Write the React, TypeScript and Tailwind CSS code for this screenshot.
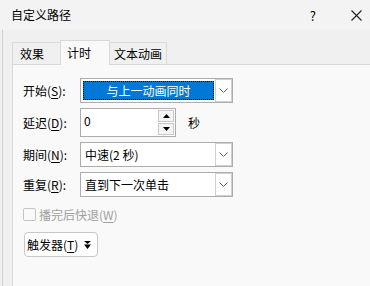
import React from 'react'

const font = { fontFamily: '"Noto Sans CJK SC", "Noto Sans", sans-serif' }

function Chevron() {
  return (
    <svg width="9" height="5" viewBox="0 0 9 5" className="text-[#606060]">
      <path d="M0.5 0.5 L4.5 4.5 L8.5 0.5" fill="none" stroke="currentColor" strokeWidth="1" />
    </svg>
  )
}

function Select({ children, selected = false }: { children: React.ReactNode; selected?: boolean }) {
  return (
    <div className="flex h-[25px] w-[153px] items-stretch border border-[#adadad] bg-white">
      {selected ? (
        <div className="my-[2px] ml-[2px] flex flex-1 items-center justify-center border border-dotted border-black bg-[#0078d7] text-white">
          {children}
        </div>
      ) : (
        <div className="flex flex-1 items-center pl-[4px] text-black">{children}</div>
      )}
      <div className="my-[0px] ml-[1px] flex w-[17px] items-center justify-center border border-[#d0d0d0] bg-white">
        <Chevron />
      </div>
    </div>
  )
}

function Label({ text, k }: { text: string; k: string }) {
  return (
    <div className="w-[57px] text-black">
      {text}(<span className="underline underline-offset-2">{k}</span>):
    </div>
  )
}

export default function App() {
  return (
    <div
      className="relative flex h-[286px] w-[370px] flex-col overflow-hidden bg-[#f0f0f0] text-[12px] leading-none"
      style={font}
    >
      {/* title bar */}
      <div className="flex h-[30px] items-center bg-[#f3f3f3] pl-[11px]">
        <span className="flex-1 text-[12px]">自定义路径</span>
        <span className="mr-[35px] text-[13px]">?</span>
        <svg width="11" height="11" viewBox="0 0 11 11" className="mr-[8px]">
          <path d="M0.5 0.5 L10.5 10.5 M10.5 0.5 L0.5 10.5" stroke="#222" strokeWidth="1.1" />
        </svg>
      </div>

      <div className="flex flex-1 border-l border-[#cfcfcf] ml-[2px] pt-[10px]">
        <div className="ml-[9px] flex flex-1 flex-col">
          {/* tabs */}
          <div className="flex h-[24px] items-end">
            <div className="flex h-[22px] w-[48px] items-center border-l border-t border-[#d9d9d9] pl-[7px]">
              效果
            </div>
            <div className="relative z-10 -mb-px flex h-[25px] w-[50px] items-start border-x border-t border-[#d9d9d9] bg-[#f9f9f9] pl-[6px] pt-[6px]">
              计时
            </div>
            <div className="flex h-[22px] w-[57px] items-center border-r border-t border-[#d9d9d9] pl-[4px]">
              文本动画
            </div>
          </div>

          {/* panel */}
          <div className="flex flex-1 flex-col border-l border-t border-[#d9d9d9] bg-[#f9f9f9] pl-[10px] pt-[13px]">
            <div className="flex items-center">
              <Label text="开始" k="S" />
              <Select selected>与上一动画同时</Select>
            </div>

            <div className="mt-[5px] flex items-center">
              <Label text="延迟" k="D" />
              <div className="flex h-[29px] w-[96px] border border-[#adadad] bg-white">
                <div className="flex-1 pl-[3px] pt-[6px]">0</div>
                <div className="mr-px flex w-[16px] flex-col justify-between py-px">
                  <div className="flex h-[12px] items-center justify-center border border-[#c8c8c8] bg-[#f5f5f5]">
                    <svg width="7" height="4" viewBox="0 0 7 4">
                      <path d="M3.5 0 L7 4 L0 4 Z" fill="#000" />
                    </svg>
                  </div>
                  <div className="flex h-[12px] items-center justify-center border border-[#c8c8c8] bg-[#f5f5f5]">
                    <svg width="7" height="4" viewBox="0 0 7 4">
                      <path d="M0 0 L7 0 L3.5 4 Z" fill="#000" />
                    </svg>
                  </div>
                </div>
              </div>
              <span className="ml-[12px]">秒</span>
            </div>

            <div className="mt-[5px] flex items-center">
              <Label text="期间" k="N" />
              <Select>中速(2 秒)</Select>
            </div>

            <div className="mt-[5px] flex items-center">
              <Label text="重复" k="R" />
              <Select>直到下一次单击</Select>
            </div>

            <div className="mt-[11px] flex items-center gap-[3px] text-[#a0a0a0]">
              <div className="h-[13px] w-[13px] rounded-[2px] border border-[#c4c4c4] bg-[#f9f9f9]" />
              <span>
                播完后快退(<span className="underline underline-offset-2">W</span>)
              </span>
            </div>

            <div className="mt-[11px] ml-px flex">
              <div className="flex h-[25px] items-center gap-[6px] rounded-[4px] border border-[#c8c8c8] bg-white pl-[2px] pr-[6px]">
                <span>
                  触发器(<span className="underline underline-offset-2">T</span>)
                </span>
                <svg width="7" height="8" viewBox="0 0 7 8">
                  <path d="M0 0 L7 0 L3.5 3 Z M0 3.5 L7 3.5 L3.5 8 Z" fill="#000" />
                </svg>
              </div>
            </div>
          </div>
        </div>
      </div>
    </div>
  )
}
